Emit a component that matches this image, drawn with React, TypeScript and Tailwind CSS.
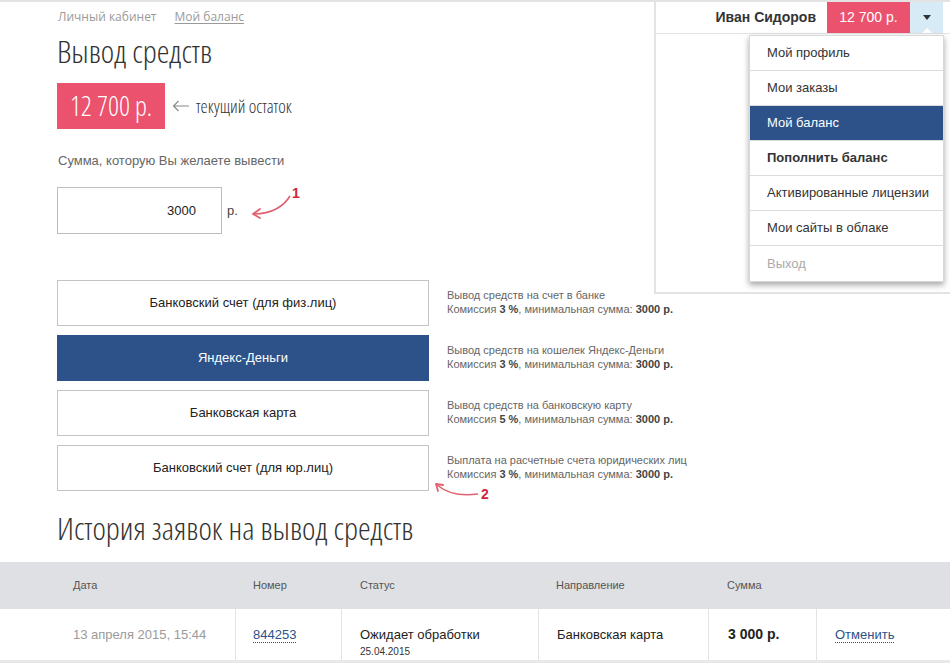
import React from 'react';

const cond = "font-['Open_Sans'] font-light [font-stretch:75%]";
const sans = "font-['Liberation_Sans',Arial,sans-serif]";

const methods = [
  { title: 'Банковский счет (для физ.лиц)', desc: 'Вывод средств на счет в банке', fee: '3' },
  { title: 'Яндекс-Деньги', desc: 'Вывод средств на кошелек Яндекс-Деньги', fee: '3', active: true },
  { title: 'Банковская карта', desc: 'Вывод средств на банковскую карту', fee: '5' },
  { title: 'Банковский счет (для юр.лиц)', desc: 'Выплата на расчетные счета юридических лиц', fee: '3' },
];

const menu = [
  { label: 'Мой профиль' },
  { label: 'Мои заказы' },
  { label: 'Мой баланс', active: true },
  { label: 'Пополнить баланс', bold: true },
  { label: 'Активированные лицензии' },
  { label: 'Мои сайты в облаке' },
  { label: 'Выход', muted: true },
];

const UserPanel: React.FC = () => (
  <div className="absolute top-0 left-[654px] w-[296px] h-[292px] bg-white border-l-2 border-b-2 border-[#e3e3e3]">
    <div className="flex items-stretch justify-end h-[32px] border-b border-[#e3e3e3] pr-[7px]">
      <span className={`${sans} font-bold text-[14px] text-[#333] self-center mr-[11px]`}>Иван Сидоров</span>
      <div className={`${sans} w-[83px] bg-[#ea526e] text-white text-[14px] flex items-center justify-center`}>12 700 р.</div>
      <div className="relative w-[33px] bg-[#d6ebf5] flex items-center justify-center">
        <span className="w-0 h-0 border-l-[4px] border-r-[4px] border-t-[5px] border-l-transparent border-r-transparent border-t-[#333]" />
        <span className="absolute bottom-0 left-1/2 -translate-x-1/2 w-0 h-0 border-l-[5px] border-r-[5px] border-b-[5px] border-l-transparent border-r-transparent border-b-white" />
      </div>
    </div>
    <div className="absolute top-[33px] left-[93px] w-[195px] bg-white border border-[#d9d9d9] shadow-[0_3px_6px_rgba(0,0,0,0.35)]">
      {menu.map((m, i) => (
        <div
          key={m.label}
          className={`${sans} h-[35px] flex items-center pl-[17px] text-[13px] ${i < menu.length - 1 ? 'border-b border-[#dcdcdc]' : ''} ${
            m.active ? 'bg-[#2c5289] text-white' : m.muted ? 'text-[#aaa]' : 'text-[#333]'
          } ${m.bold ? 'font-bold' : ''}`}
        >
          {m.label}
        </div>
      ))}
    </div>
  </div>
);

const Arrow1 = () => (
  <svg className="absolute left-[248px] top-[182px]" width="60" height="36" viewBox="0 0 60 36">
    <text x="44" y="14" fill="#d0263a" fontSize="14" fontWeight="bold" fontFamily="Liberation Sans, Arial, sans-serif">1</text>
    <path d="M42 12 C 36 22, 24 30, 6 30" fill="none" stroke="#e0616f" strokeWidth="1.6" />
    <path d="M5 30 L 12 25 M5 30 L 12 34" fill="none" stroke="#e0616f" strokeWidth="1.8" strokeLinecap="round" />
  </svg>
);

const Arrow2 = () => (
  <svg className="absolute left-[432px] top-[476px]" width="64" height="26" viewBox="0 0 64 26">
    <text x="49" y="21" fill="#d0263a" fontSize="14" fontWeight="bold" fontFamily="Liberation Sans, Arial, sans-serif">2</text>
    <path d="M46 16 C 32 18, 16 16, 5 7" fill="none" stroke="#e0616f" strokeWidth="1.6" />
    <path d="M4 6 L 6 13 M4 6 L 11 7" fill="none" stroke="#e0616f" strokeWidth="1.8" strokeLinecap="round" />
  </svg>
);

const App: React.FC = () => {
  return (
    <div className="relative w-[950px] h-[666px] overflow-hidden bg-white border-t-2 border-[#e3e3e3]">
      <div className="pl-[57px]">
        <div className="font-['Open_Sans'] [font-stretch:90%] text-[12px] leading-[18px] text-[#9a9a9a] pt-[6px] pl-[1px] flex gap-[18px]">
          <span>Личный кабинет</span>
          <span className="underline underline-offset-2">Мой баланс</span>
        </div>
        <h1 className={`${cond} text-[32px] leading-[36px] text-[#333] mt-[7px]`}>Вывод средств</h1>
        <div className="flex items-center mt-[14px]">
          <div className={`${cond} w-[108px] h-[46px] bg-[#ea526e] text-white text-[27px] flex items-center justify-center`}>12 700 р.</div>
          <svg className="ml-[7px]" width="18" height="12" viewBox="0 0 18 12">
            <path d="M17 6 H1.5 M6.5 1 L1.5 6 L6.5 11" fill="none" stroke="#888" strokeWidth="1.1" />
          </svg>
          <span className={`${cond} ml-[6px] text-[18px] text-[#333]`}>текущий остаток</span>
        </div>
        <p className={`${sans} text-[13px] leading-[18px] text-[#666] mt-[23px] pl-[1px]`}>Сумма, которую Вы желаете вывести</p>
        <div className="flex items-center mt-[17px]">
          <div className={`${sans} w-[165px] h-[47px] border border-[#bdbdbd] flex items-center justify-end pr-[25px] text-[13px] text-[#222]`}>3000</div>
          <span className={`${sans} ml-[5px] text-[13px] text-[#444]`}>р.</span>
        </div>
        <div className="flex flex-col gap-[9px] mt-[46px]">
          {methods.map((m) => (
            <div key={m.title} className="flex items-center">
              <div
                className={`${sans} w-[372px] h-[46px] flex items-center justify-center text-[13px] ${
                  m.active ? 'bg-[#2c5289] text-white' : 'border border-[#c4c4c4] text-[#222]'
                }`}
              >
                {m.title}
              </div>
              <div className={`${sans} ml-[18px] -mt-[3px] text-[11px] leading-[14px] text-[#666]`}>
                <div>{m.desc}</div>
                <div>
                  Комиссия <b className="text-[#444]">{m.fee} %</b>, минимальная сумма: <b className="text-[#444]">3000 р.</b>
                </div>
              </div>
            </div>
          ))}
        </div>
        <h2 className={`${cond} text-[32px] leading-[36px] text-[#333] mt-[19px]`}>История заявок на вывод средств</h2>
      </div>

      <div className={`${sans} mt-[16px]`}>
        <div className="flex h-[47px] items-center bg-[#dfe0e3] text-[11px] text-[#555]">
          <div className="w-[235px] pl-[73px]">Дата</div>
          <div className="w-[106px] pl-[18px]">Номер</div>
          <div className="w-[197px] pl-[19px]">Статус</div>
          <div className="w-[170px] pl-[18px]">Направление</div>
          <div className="w-[108px] pl-[19px]">Сумма</div>
          <div className="flex-1" />
        </div>
        <div className="flex h-[54px] border-b-[3px] border-[#e8e8e8] text-[13px]">
          <div className="w-[235px] pl-[73px] flex items-center text-[#9a9a9a]">13 апреля 2015, 15:44</div>
          <div className="w-[106px] pl-[17px] flex items-center border-l border-[#e3e3e3]">
            <span className="text-[#2c5289] border-b border-dotted border-[#2c5289] leading-[15px]">844253</span>
          </div>
          <div className="w-[197px] pl-[18px] pt-[18px] flex flex-col border-l border-[#e3e3e3] text-[#222]">
            <span className="leading-[16px]">Ожидает обработки</span>
            <span className="text-[10px] leading-[13px] mt-[2px] text-[#333]">25.04.2015</span>
          </div>
          <div className="w-[170px] pl-[18px] flex items-center border-l border-[#e3e3e3] text-[#222]">Банковская карта</div>
          <div className="w-[108px] pl-[19px] flex items-center border-l border-[#e3e3e3] font-bold text-[14px] text-[#222]">3 000 р.</div>
          <div className="flex-1 pl-[18px] flex items-center border-l border-[#e3e3e3]">
            <span className="text-[#2c5289] border-b border-dotted border-[#2c5289] leading-[15px]">Отменить</span>
          </div>
        </div>
      </div>

      <Arrow1 />
      <Arrow2 />
      <UserPanel />
    </div>
  );
};

export default App;
